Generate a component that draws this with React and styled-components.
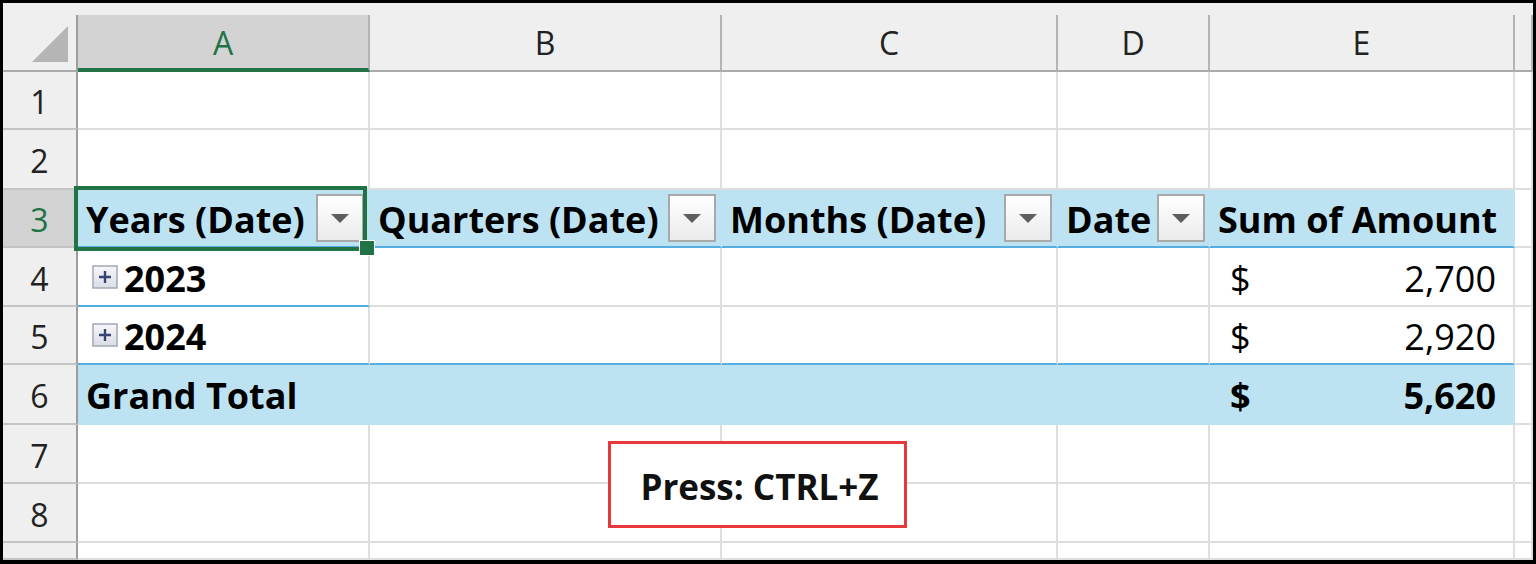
import styled, { createGlobalStyle } from "styled-components";

const GlobalStyle = createGlobalStyle`
  html, body {
    margin: 0;
    padding: 0;
    background: #fff;
    overflow: hidden;
  }
  * { box-sizing: border-box; }
`;

const green = "#217346";
const band = "#bde3f3";
const bandLine = "#55aedf";
const grid = "#dedede";

const Frame = styled.div`
  position: relative;
  width: 1536px;
  height: 564px;
  border: 3px solid #000;
  border-bottom-width: 4px;
  background: #fff;
  font-family: "Open Sans", "Liberation Sans", sans-serif;
  color: #000;
`;

const Sheet = styled.div`
  display: grid;
  grid-template-columns: 75px 292px 352px 336px 152px 305px 18px;
  grid-template-rows: 12px 57px 58px 60px 58px 59px 58px 60px 59px 59px 17px;
  height: 100%;
  overflow: hidden;
`;

const TopStrip = styled.div`
  grid-column: 1 / -1;
  background: #efefef;
`;

const Corner = styled.div`
  display: flex;
  align-items: flex-end;
  justify-content: flex-end;
  padding: 0 8px 8px 0;
  background: #efefef;
  border-right: 2px solid #9d9d9d;
  border-bottom: 2px solid #ababab;
`;

const CornerTriangle = styled.div`
  width: 0;
  height: 0;
  border-left: 36px solid transparent;
  border-bottom: 36px solid #b5b5b5;
`;

const ColHeader = styled.div`
  display: flex;
  align-items: center;
  justify-content: center;
  font-size: 32px;
  background: ${(p) => (p.selected ? "#d3d3d3" : "#efefef")};
  color: ${(p) => (p.selected ? green : "#222")};
  border-right: 2px solid #b4b4b4;
  border-bottom: ${(p) => (p.selected ? `4px solid ${green}` : "2px solid #ababab")};
  padding-top: ${(p) => (p.selected ? "2px" : "0")};
`;

const RowHeader = styled.div`
  display: flex;
  align-items: center;
  justify-content: center;
  padding-top: 3px;
  font-size: 32px;
  background: ${(p) => (p.selected ? "#d3d3d3" : "#efefef")};
  color: ${(p) => (p.selected ? green : "#222")};
  border-right: 2px solid #9d9d9d;
  border-bottom: 2px solid #c4c4c4;
`;

const Cell = styled.div`
  position: relative;
  display: flex;
  align-items: center;
  justify-content: ${(p) => (p.spread ? "space-between" : "flex-start")};
  gap: 6px;
  padding: ${(p) => (p.amount ? "3px 17px 0 20px" : "3px 4px 0 8px")};
  font-size: 36px;
  font-weight: ${(p) => (p.bold ? 700 : 400)};
  white-space: nowrap;
  background: ${(p) => (p.band ? band : "#fff")};
  border-right: 2px solid ${(p) => (p.band ? band : grid)};
  border-bottom: 2px solid
    ${(p) => (p.line ? bandLine : p.band ? band : grid)};
`;

const FilterButton = styled.div`
  flex: none;
  display: flex;
  align-items: center;
  justify-content: center;
  width: 48px;
  height: 48px;
  margin-top: -3px;
  border: 2px solid #a8a8a8;
  background: linear-gradient(#ffffff, #ebebeb);

  &::after {
    content: "";
    width: 0;
    height: 0;
    border-left: 9px solid transparent;
    border-right: 9px solid transparent;
    border-top: 9px solid #5e5e5e;
  }
`;

const ExpandBox = styled.svg`
  flex: none;
  width: 26px;
  height: 24px;
  margin: -3px 0 0 6px;
`;

const SelectionBox = styled.div`
  position: absolute;
  top: -4px;
  left: -4px;
  right: 1px;
  bottom: -5px;
  border: 4px solid ${green};
  pointer-events: none;
  z-index: 2;
`;

const FillHandle = styled.div`
  position: absolute;
  right: -7px;
  bottom: -10px;
  width: 16px;
  height: 16px;
  background: ${green};
  border: 1px solid #fff;
  z-index: 3;
`;

const Callout = styled.div`
  position: absolute;
  left: 605px;
  top: 438px;
  width: 299px;
  height: 87px;
  display: flex;
  align-items: center;
  justify-content: center;
  padding: 4px 0 0 4px;
  border: 3px solid #e8383b;
  background: #fff;
  font-size: 35px;
  font-weight: 700;
  color: #111;
  z-index: 4;
`;

const columns = ["A", "B", "C", "D", "E", ""];

function Expand() {
  return (
    <ExpandBox viewBox="0 0 26 24">
      <defs>
        <linearGradient id="exp" x1="0" y1="0" x2="0" y2="1">
          <stop offset="0" stopColor="#f6f7fa" />
          <stop offset="1" stopColor="#d9dde6" />
        </linearGradient>
      </defs>
      <rect x="1" y="1" width="24" height="22" fill="url(#exp)" stroke="#a4a8b4" strokeWidth="1.5" />
      <path d="M7 12h12M13 6v12" stroke="#354470" strokeWidth="2.4" />
    </ExpandBox>
  );
}

function EmptyRow({ n }) {
  return (
    <>
      <RowHeader>{n}</RowHeader>
      {columns.map((c, i) => (
        <Cell key={i} />
      ))}
    </>
  );
}

function Amount({ value, bold, band, line }) {
  return (
    <Cell amount spread bold={bold} band={band} line={line}>
      <span>$</span>
      <span>{value}</span>
    </Cell>
  );
}

export default function App() {
  return (
    <>
      <GlobalStyle />
      <Frame>
        <Sheet>
          <TopStrip />
          <Corner>
            <CornerTriangle />
          </Corner>
          {columns.map((c, i) => (
            <ColHeader key={i} selected={c === "A"}>
              {c}
            </ColHeader>
          ))}

          <EmptyRow n={1} />
          <EmptyRow n={2} />

          <RowHeader selected>3</RowHeader>
          <Cell band bold line spread>
            Years (Date)
            <FilterButton />
            <SelectionBox />
            <FillHandle />
          </Cell>
          <Cell band bold line spread>
            Quarters (Date)
            <FilterButton />
          </Cell>
          <Cell band bold line spread>
            Months (Date)
            <FilterButton />
          </Cell>
          <Cell band bold line spread>
            Date
            <FilterButton />
          </Cell>
          <Cell band bold line>
            Sum of Amount
          </Cell>
          <Cell />

          <RowHeader>4</RowHeader>
          <Cell bold line>
            <Expand />
            2023
          </Cell>
          <Cell />
          <Cell />
          <Cell />
          <Amount value="2,700" />
          <Cell />

          <RowHeader>5</RowHeader>
          <Cell bold line>
            <Expand />
            2024
          </Cell>
          <Cell line />
          <Cell line />
          <Cell line />
          <Amount value="2,920" line />
          <Cell />

          <RowHeader>6</RowHeader>
          <Cell band bold>
            Grand Total
          </Cell>
          <Cell band />
          <Cell band />
          <Cell band />
          <Amount value="5,620" bold band />
          <Cell />

          <EmptyRow n={7} />
          <EmptyRow n={8} />
          <EmptyRow n="" />
        </Sheet>
        <Callout>Press: CTRL+Z</Callout>
      </Frame>
    </>
  );
}
